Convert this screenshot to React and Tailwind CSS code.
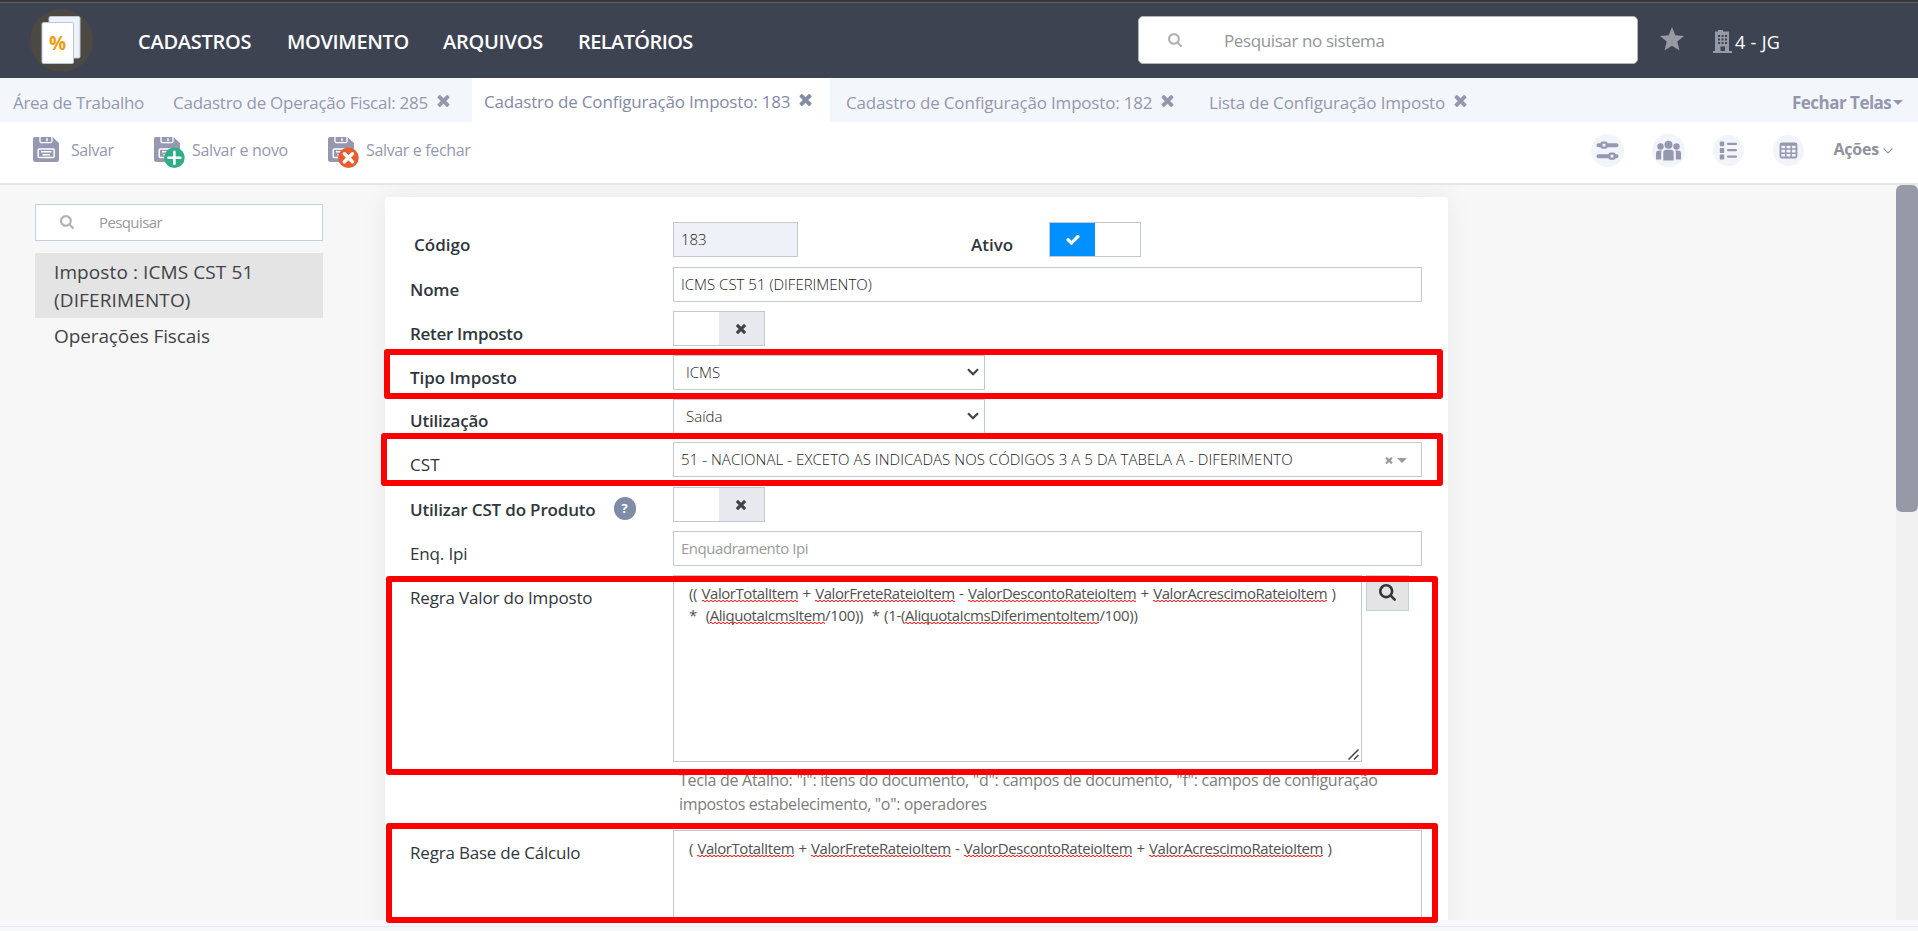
function Cross({ className }) {
  return (
    <svg viewBox="110 366 1188 1188" className={className} fill="currentColor">
      <path d="M1298 1322q0 40-28 68l-136 136q-28 28-68 28t-68-28l-294-294-294 294q-28 28-68 28t-68-28l-136-136q-28-28-28-68t28-68l294-294-294-294q-28-28-28-68t28-68l136-136q28-28 68-28t68 28l294 294 294-294q28-28 68-28t68 28l136 136q28 28 28 68t-28 68l-294 294 294 294q28 28 28 68z" />
    </svg>
  );
}

function Search({ className }) {
  return (
    <svg viewBox="0 128 1664 1664" className={className} fill="currentColor">
      <path d="M1152 832q0-185-131.5-316.5t-316.5-131.5-316.5 131.5-131.5 316.5 131.5 316.5 316.5 131.5 316.5-131.5 131.5-316.5zm512 832q0 52-38 90t-90 38q-54 0-90-38l-343-342q-179 124-399 124-143 0-273.5-55.5t-225-150-150-225-55.5-273.5 55.5-273.5 150-225 225-150 273.5-55.5 273.5 55.5 225 150 150 225 55.5 273.5q0 220-124 399l343 343q37 37 37 90z" />
    </svg>
  );
}

function Check({ className }) {
  return (
    <svg viewBox="121 370 1550 1152" className={className} fill="currentColor">
      <path d="M1671 566q0 40-28 68l-724 724-136 136q-28 28-68 28t-68-28l-136-136-362-362q-28-28-28-68t28-68l136-136q28-28 68-28t68 28l294 295 656-657q28-28 68-28t68 28l136 136q28 28 28 68z" />
    </svg>
  );
}

function Logo() {
  return (
    <svg viewBox="0 0 63 63" className="mt-1.5 h-[63px] w-[63px] shrink-0">
      <circle cx="31.5" cy="31.5" r="31.5" fill="#4c4843" />
      <rect x="19" y="7.5" width="31" height="41.5" rx="1.5" fill="#eef2f8" stroke="#b9c6d6" />
      <rect x="12" y="13.5" width="31.5" height="41" rx="1.5" fill="#fff" stroke="#b9c6d6" />
      <text x="27.5" y="40.5" textAnchor="middle" fontFamily="Open Sans, sans-serif" fontWeight="700" fontSize="19" fill="#f09a0e">%</text>
    </svg>
  );
}

function Floppy({ badge }) {
  return (
    <svg viewBox="0 0 32 32" className="h-8 w-8 shrink-0">
      <path d="M2 0h17.5L26 6v16.500a2.500 2.500 0 0 1-2.500 2.500H2.500A2.500 2.500 0 0 1 0 22.500V2a2 2 0 0 1 2-2z" fill="#9598b0" />
      <path d="M7 0v4.200a1.500 1.500 0 0 0 1.500 1.500h9a1.500 1.500 0 0 0 1.500-1.500V0" fill="none" stroke="#fff" strokeWidth="1.300" />
      <path d="M14 1.200v3" stroke="#fff" strokeWidth="1.400" />
      <rect x="5.200" y="12" width="16" height="8.500" rx="1.200" fill="none" stroke="#fff" strokeWidth="1.500" />
      <path d="M8 14.800h10.500M9.500 17.700h7.500" stroke="#fff" strokeWidth="1.400" />
      {badge === "add" && (
        <g>
          <circle cx="20.400" cy="20.800" r="10.300" fill="#2fae86" />
          <path d="M20.400 14.800v12M14.400 20.800h12" stroke="#fff" strokeWidth="2.600" strokeLinecap="round" />
        </g>
      )}
      {badge === "close" && (
        <g>
          <circle cx="20.400" cy="20.800" r="10.300" fill="#ea5b2e" />
          <path d="M16.400 16.800l8 8M24.400 16.800l-8 8" stroke="#fff" strokeWidth="3.600" strokeLinecap="round" />
        </g>
      )}
    </svg>
  );
}

function SlidersIcon() {
  return (
    <svg viewBox="0 0 33 33" className="h-[33px] w-[33px]">
      <circle cx="16.500" cy="16.500" r="16.500" fill="#f1f4f9" />
      <g stroke="#9598b0" strokeWidth="4" strokeLinecap="round">
        <path d="M7.500 11.200h18M7.500 22.200h18" />
      </g>
      <rect x="10.500" y="8.700" width="5" height="5" rx="1" fill="#f1f4f9" stroke="#9598b0" strokeWidth="2.200" />
      <rect x="18.500" y="19.700" width="5" height="5" rx="1" fill="#f1f4f9" stroke="#9598b0" strokeWidth="2.200" />
    </svg>
  );
}

function PeopleIcon() {
  return (
    <svg viewBox="0 0 33 33" className="h-[33px] w-[33px]">
      <circle cx="16.500" cy="16.500" r="16.500" fill="#f1f4f9" />
      <g fill="#9598b0">
        <circle cx="16.500" cy="10.700" r="4" />
        <circle cx="8.500" cy="12.500" r="3.200" />
        <circle cx="24.500" cy="12.500" r="3.200" />
        <path d="M11.300 26.500v-8a2.800 2.800 0 0 1 2.800-2.800h4.800a2.800 2.800 0 0 1 2.800 2.800v8z" />
        <path d="M4 25.500v-6a3 3 0 0 1 3-3h3q-.8 1-.8 2.400v6.600zM29 25.500v-6a3 3 0 0 0-3-3h-3q.8 1 .8 2.400v6.600z" />
      </g>
    </svg>
  );
}

function ListIcon() {
  return (
    <svg viewBox="0 0 31 31" className="h-[31px] w-[31px]">
      <circle cx="15.500" cy="15.500" r="15.500" fill="#f1f4f9" />
      <g fill="#9598b0">
        <rect x="6.800" y="6.500" width="4.400" height="4.800" rx=".7" />
        <rect x="6.800" y="13.100" width="4.400" height="4.800" rx=".7" />
        <rect x="6.800" y="19.600" width="4.400" height="4.800" rx=".7" />
        <rect x="14" y="7.700" width="10" height="2.200" rx="1" />
        <rect x="14" y="14" width="10" height="2.200" rx="1" />
        <rect x="14" y="20.500" width="10" height="2.200" rx="1" />
      </g>
    </svg>
  );
}

function TableIcon() {
  return (
    <svg viewBox="0 0 31 31" className="h-[31px] w-[31px]">
      <circle cx="15.500" cy="15.500" r="15.500" fill="#f1f4f9" />
      <rect x="7.500" y="8.500" width="16" height="14" rx="1.500" fill="none" stroke="#9598b0" strokeWidth="1.800" />
      <path d="M7 9.500h17" stroke="#9598b0" strokeWidth="2.600" />
      <path d="M7.500 14h16M7.500 18.200h16M12.800 9v13.500M18.200 9v13.500" stroke="#9598b0" strokeWidth="1.400" />
    </svg>
  );
}

function Tab({ className, text, close = true }) {
  return (
    <div className={"flex h-full shrink-0 items-center gap-[9px] pt-[5px] text-[17px] leading-none whitespace-nowrap " + className}>
      <span className="shrink-0">{text}</span>
      {close && <Cross className="mb-[3px] h-3 w-[13px] shrink-0" />}
    </div>
  );
}

function Row({ label, labelClass = "font-semibold tracking-[-0.17px]", className = "h-11", children }) {
  return (
    <div className={"flex shrink-0 items-start " + className}>
      <div className={"w-[263px] shrink-0 text-[17px] leading-[45px] whitespace-nowrap text-[#30363c] " + labelClass}>{label}</div>
      {children}
    </div>
  );
}

function Field({ className, children }) {
  return (
    <div className={"flex h-[35px] items-center border border-[#c2c8d6] pb-px text-[15px] whitespace-nowrap " + className}>
      {children}
    </div>
  );
}

function ToggleOff() {
  return (
    <div className="flex h-[35px] w-[92px] border border-[#c2c8d6] bg-white">
      <div className="flex-1" />
      <div className="flex w-[45px] items-center justify-center bg-[#e8e9ee] pr-[2px]">
        <Cross className="h-[10px] w-[10px] text-[#3f4347]" />
      </div>
    </div>
  );
}

function Chevron() {
  return (
    <svg viewBox="0 0 12 8" className="h-2 w-3" fill="none" stroke="#444" strokeWidth="2.200">
      <path d="M1 1.200l5 5 5-5" />
    </svg>
  );
}

function Sp({ children }) {
  return (
    <span className="bg-[image:repeating-linear-gradient(90deg,#ff2a2a_0_2px,#ff2a2a30_2px_4px),repeating-linear-gradient(90deg,#ff2a2a30_0_2px,#ff2a2a_2px_4px)] bg-no-repeat tracking-[-0.44px] [background-position:0_17px,0_18px] [background-size:100%_1px]">
      {children}
    </span>
  );
}

function Items() {
  return (
    <>
      <Sp>ValorTotalItem</Sp> + <Sp>ValorFreteRateioItem</Sp> - <Sp>ValorDescontoRateioItem</Sp> + <Sp>ValorAcrescimoRateioItem</Sp> )
    </>
  );
}

function Mark({ className }) {
  return <div className={"absolute rounded-[3px] border-[6px] border-[#fe0000] " + className} />;
}

export default function App() {
  return (
    <div className="flex h-[931px] w-[1918px] flex-col overflow-hidden bg-[#f7f7f7] font-['Open_Sans',sans-serif]">
      <div className="h-[3px] shrink-0 border-b border-[#626366] bg-[#37383c]" />

      <header className="flex h-[75px] shrink-0 items-start bg-[#3e4351] pl-[30px] text-white">
        <Logo />
        <nav className="ml-[45px] flex text-[20px] leading-[77px] font-semibold tracking-[-0.25px] whitespace-nowrap">
          <span className="w-[149px]">CADASTROS</span>
          <span className="w-[156px] tracking-[-0.35px]">MOVIMENTO</span>
          <span className="w-[135px]">ARQUIVOS</span>
          <span className="w-[560px] tracking-[-0.6px]">RELATÓRIOS</span>
        </nav>
        <div className="mt-[13px] flex h-12 w-[500px] shrink-0 items-center rounded-[5px] border border-[#b5b5b5] bg-white pl-[29px] text-[#939598]">
          <Search className="mb-[1px] h-[14px] w-[14px] text-[#b3b3b3]" />
          <span className="ml-[42px] pt-px text-[17px] leading-none tracking-[-0.39px]">Pesquisar no sistema</span>
        </div>
        <svg viewBox="0 0 24 24" className="mt-[24px] ml-[22px] h-6 w-6 shrink-0" fill="#959aa5">
          <path d="M12 0l3.300 8.300 8.700.6-6.700 5.700 2.200 8.900L12 18.700l-7.500 4.800 2.200-8.900L0 8.900l8.700-.6z" />
        </svg>
        <svg viewBox="0 0 19 23" className="mt-[27px] ml-[29px] h-[23px] w-[19px] shrink-0">
          <path d="M4 1.500h1V0h5v1.500h6V21h3v2H0v-2h2V1.500z" fill="#959aa5" />
          <path d="M5 5h2v2H5zM8.500 5h2v2h-2zM12 5h2v2h-2zM5 8.500h2v2H5zM8.500 8.500h2v2h-2zM12 8.500h2v2h-2zM5 12h2v2H5zM8.500 12h2v2h-2zM12 12h2v2h-2zM7.500 16.500h4.500V21H7.500z" fill="#3e4351" />
        </svg>
        <span className="ml-[3px] text-[18px] leading-[79px] tracking-[0.32px] whitespace-nowrap">4 - JG</span>
      </header>

      <div className="flex h-11 shrink-0 bg-[#f3f7fb] text-[#9498ae]">
        <Tab text="Área de Trabalho" close={false} className="w-[173px] pl-[13px] tracking-[-0.32px]" />
        <Tab text="Cadastro de Operação Fiscal: 285" className="w-[299px] tracking-[-0.25px]" />
        <Tab text="Cadastro de Configuração Imposto: 183" className="w-[358px] bg-white pb-[2px] pl-3 tracking-[-0.19px] text-[#838aa4]" />
        <Tab text="Cadastro de Configuração Imposto: 182" className="w-[379px] pl-4 tracking-[-0.19px]" />
        <Tab text="Lista de Configuração Imposto" className="w-[583px] tracking-[-0.16px]" />
        <div className="flex items-center pt-[5px] text-[17px] leading-none font-bold tracking-[-0.52px] whitespace-nowrap">
          Fechar Telas
          <span className="ml-[2px] border-x-5 border-t-5 border-x-transparent border-t-[#9498ae]" />
        </div>
      </div>

      <div className="flex h-[63px] shrink-0 border-b-2 border-[#e4e5e5] bg-white pl-[33px] text-[16px] leading-[56px] whitespace-nowrap text-[#9498ae]">
        <div className="flex w-[121px] shrink-0 tracking-[-0.4px]">
          <div className="mt-[15px] mr-[6px]"><Floppy /></div>Salvar
        </div>
        <div className="flex w-[174px] shrink-0 tracking-[-0.27px]">
          <div className="mt-[15px] mr-[6px]"><Floppy badge="add" /></div>Salvar e novo
        </div>
        <div className="flex shrink-0 tracking-[-0.35px]">
          <div className="mt-[15px] mr-[6px]"><Floppy badge="close" /></div>Salvar e fechar
        </div>
        <div className="ml-auto flex items-start">
          <div className="mt-3 mr-[28px]"><SlidersIcon /></div>
          <div className="mt-3 mr-[28px]"><PeopleIcon /></div>
          <div className="mt-[13px] mr-[29px]"><ListIcon /></div>
          <div className="mt-[13px] mr-[29px]"><TableIcon /></div>
          <span className="leading-[55px] font-bold tracking-[-0.2px] text-[#8e929c]">Ações</span>
          <svg viewBox="0 0 10 6" className="mt-[26px] mr-[25px] ml-[4px] h-[6px] w-[10px]" fill="none" stroke="#8e929c" strokeWidth="1.200">
            <path d="M.6.6L5 5 9.400.6" />
          </svg>
        </div>
      </div>

      <main className="relative flex h-[735px] shrink-0 overflow-hidden">
        <aside className="w-[385px] shrink-0 pt-[19px] pl-[35px] text-[#3f4347]">
          <div className="flex h-[37px] w-[288px] items-center border border-[#c3d0de] bg-white pl-6">
            <Search className="mb-px h-[14px] w-[14px] text-[#b3b3b3]" />
            <span className="ml-[25px] pb-px text-[15px] tracking-[-0.6px] text-[#999]">Pesquisar</span>
          </div>
          <div className="mt-3 h-[65px] w-[288px] bg-[#e4e4e4] pt-[5px] pl-[19px] text-[19px] leading-[28px]">
            <div className="tracking-[0.1px]">Imposto : ICMS CST 51</div>
            <div className="tracking-[0.13px]">(DIFERIMENTO)</div>
          </div>
          <div className="pl-[19px] text-[19px] leading-[36px] tracking-[-0.11px]">Operações Fiscais</div>
        </aside>

        <section className="mt-3 h-[900px] w-[1063px] shrink-0 rounded-t-[3px] bg-white pt-[25px] pl-[25px] shadow-[0_0_28px_rgba(0,0,0,0.06)]">
          <Row label="Código" labelClass="font-semibold pl-1" className="h-[45px]">
            <Field className="w-[125px] bg-[#eef1f7] px-[7px] font-light text-[#222]">183</Field>
            <span className="ml-[173px] w-[78px] text-[17px] leading-[45px] font-semibold text-[#30363c]">Ativo</span>
            <div className="flex h-[35px] w-[92px] border border-[#c2c8d6] bg-white">
              <div className="flex w-[45px] items-center justify-center bg-[#0090ff] text-white">
                <Check className="h-[10px] w-[14px]" />
              </div>
            </div>
          </Row>
          <Row label="Nome">
            <Field className="w-[749px] px-[7px] font-light text-[#222]">ICMS CST 51 (DIFERIMENTO)</Field>
          </Row>
          <Row label="Reter Imposto" labelClass="font-semibold tracking-[-0.3px]">
            <ToggleOff />
          </Row>
          <Row label="Tipo Imposto" labelClass="font-semibold tracking-[-0.06px]">
            <Field className="w-[312px] justify-between pr-[5px] pl-3 font-light text-[#222]">ICMS<Chevron /></Field>
          </Row>
          <Row label="Utilização" labelClass="-mt-px font-semibold tracking-[-0.2px]" className="h-[43px]">
            <Field className="w-[312px] justify-between pr-[5px] pl-3 font-light text-[#222]">Saída<Chevron /></Field>
          </Row>
          <Row label="CST" labelClass="tracking-[0.1px]" className="h-[45px]">
            <Field className="w-[749px] justify-between pr-[14px] pl-[7px] font-light text-[#222]">
              <span className="tracking-[0.05px]">51 - NACIONAL - EXCETO AS INDICADAS NOS CÓDIGOS 3 A 5 DA TABELA A - DIFERIMENTO</span>
              <span className="flex items-center gap-1 pt-[2px]">
                <Cross className="h-[7px] w-[8px] text-[#999]" />
                <span className="border-x-5 border-t-5 border-x-transparent border-t-[#999]" />
              </span>
            </Field>
          </Row>
          <Row
            label={
              <span className="flex items-start">
                Utilizar CST do Produto
                <span className="mt-[10px] ml-[18px] flex h-[23px] w-[22px] items-center justify-center rounded-full bg-[#7f8ca8] text-[13px] leading-none font-bold text-white">?</span>
              </span>
            }
          >
            <ToggleOff />
          </Row>
          <Row label="Enq. Ipi" labelClass="tracking-[-0.15px]">
            <Field className="w-[749px] px-[7px] tracking-[-0.46px] text-[#9a9a9a]">Enquadramento Ipi</Field>
          </Row>
          <Row label="Regra Valor do Imposto" labelClass="tracking-[-0.17px]" className="h-[187px]">
            <div className="relative h-[187px] w-[689px] border border-[#c2c8d6] pt-[6px] pl-[15px] text-[15px] leading-[22px] tracking-[-0.34px] [word-spacing:0.8px] whitespace-pre text-[#505050]">
              <div>(( <Items /></div>
              <div>*  (<Sp>AliquotaIcmsItem</Sp>/100))  * (1-(<Sp>AliquotaIcmsDiferimentoItem</Sp>/100))</div>
              <svg viewBox="0 0 11 11" className="absolute right-[2px] bottom-[1px] h-[11px] w-[11px]" stroke="#444" strokeWidth="1.500">
                <path d="M.5 10.500l10-10M6 10.500l4.500-4.500" />
              </svg>
            </div>
            <div className="ml-1 flex h-[36px] w-[43px] items-center justify-center border border-[#c3d0de] bg-[#e4e4e4] pb-[2px] text-[#30363c]">
              <Search className="h-[17px] w-[17px]" />
            </div>
          </Row>
          <div className="flex h-[68px] flex-col pt-[6px] pl-[269px] text-[16px] leading-[24px] whitespace-nowrap text-[#7d7d7d]">
            <div className="tracking-[-0.27px]">Tecla de Atalho: "i": itens do documento, "d": campos de documento, "f": campos de configuração</div>
            <div className="tracking-[-0.35px]">impostos estabelecimento, "o": operadores</div>
          </div>
          <Row label="Regra Base de Cálculo" labelClass="tracking-[-0.2px]" className="h-[187px]">
            <div className="h-[187px] w-[749px] border border-[#c2c8d6] pt-[6px] pl-[15px] text-[15px] leading-[22px] tracking-[-0.34px] [word-spacing:0.8px] whitespace-pre text-[#505050]">
              ( <Items />
            </div>
          </Row>
        </section>

        <div className="ml-auto w-[22px] bg-[#f0f0f0]">
          <div className="h-[327px] rounded-[6px] bg-[#959aa6]" />
        </div>

        <Mark className="top-[163.500px] left-[384px] h-[50px] w-[1059px]" />
        <Mark className="top-[247.500px] left-[381px] h-[53px] w-[1062px]" />
        <Mark className="top-[391px] left-[386px] h-[199px] w-[1052px]" />
      </main>

      <footer className="relative h-[11px] shrink-0 bg-[#f7f8f9]">
        <div className="mt-[6px] h-px bg-[#e2e8ee]" />
        <Mark className="-top-[97px] left-[386px] h-[100px] w-[1052px]" />
      </footer>
    </div>
  );
}
